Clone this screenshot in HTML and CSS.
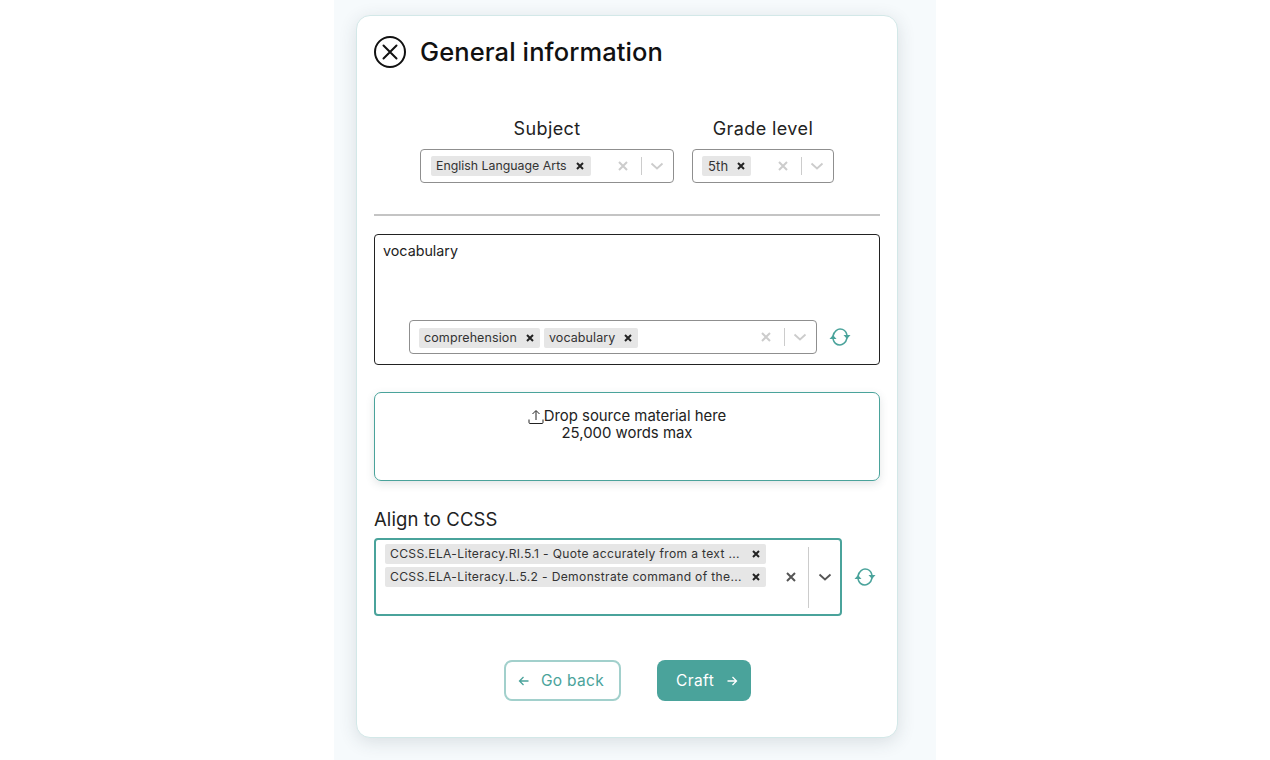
FILE: index.html
```html
<!DOCTYPE html>
<html lang="en">
<head>
<meta charset="utf-8">
<title>General information</title>
<link rel="stylesheet" href="styles.css">
</head>
<body>
<main class="column">
  <section class="card">
    <header class="head">
      <svg class="close-icon" viewBox="0 0 32 32" fill="none" stroke="#111" stroke-width="2"><circle cx="16" cy="16" r="15"/><path d="M9.500 9.500 22.500 22.500M22.500 9.500 9.500 22.500" stroke-linecap="round"/></svg>
      <h1 class="title">General information</h1>
    </header>

    <div class="selects">
      <div class="field subject">
        <label class="field-label">Subject</label>
        <div class="select">
          <div class="values"><span class="chip subject-chip"><span class="chip-text">English Language Arts</span><svg class="chip-x" viewBox="0 0 10 10"><path d="M2 2 8 8M8 2 2 8"/></svg></span></div>
          <svg class="clear" viewBox="0 0 12 12"><path d="M2 2 10 10M10 2 2 10"/></svg>
          <span class="sep"></span>
          <svg class="chev" viewBox="0 0 14 8"><path d="M1.500 1.500 7 6.500 12.500 1.500"/></svg>
        </div>
      </div>
      <div class="field grade">
        <label class="field-label">Grade level</label>
        <div class="select">
          <div class="values"><span class="chip"><span class="chip-text">5th</span><svg class="chip-x" viewBox="0 0 10 10"><path d="M2 2 8 8M8 2 2 8"/></svg></span></div>
          <svg class="clear" viewBox="0 0 12 12"><path d="M2 2 10 10M10 2 2 10"/></svg>
          <span class="sep"></span>
          <svg class="chev" viewBox="0 0 14 8"><path d="M1.500 1.500 7 6.500 12.500 1.500"/></svg>
        </div>
      </div>
    </div>

    <hr class="rule">

    <div class="topic-box">
      <div class="topic-text">vocabulary</div>
      <div class="topic-row">
        <div class="select keywords">
          <div class="values">
            <span class="chip keyword-chip"><span class="chip-text">comprehension</span><svg class="chip-x" viewBox="0 0 10 10"><path d="M2 2 8 8M8 2 2 8"/></svg></span>
            <span class="chip keyword-chip"><span class="chip-text">vocabulary</span><svg class="chip-x" viewBox="0 0 10 10"><path d="M2 2 8 8M8 2 2 8"/></svg></span>
          </div>
          <svg class="clear" viewBox="0 0 12 12"><path d="M2 2 10 10M10 2 2 10"/></svg>
          <span class="sep"></span>
          <svg class="chev" viewBox="0 0 14 8"><path d="M1.500 1.500 7 6.500 12.500 1.500"/></svg>
        </div>
        <svg class="refresh" viewBox="0 0 22 18"><path d="M4 8C5 3 9 1 11 1C14 1 17 3 18 7M18 10C17 15 13 17 11 17C8 17 5 15 4 11"/><path class="fill" d="M14.500 7H21.500L18 11ZM.5 11H7.500L4 7Z"/></svg>
      </div>
    </div>

    <div class="drop">
      <div class="drop-line"><svg class="upload" viewBox="0 0 16 16"><path d="M8 11V2M4.500 5 8 1.500 11.500 5M1 10.500V13.500Q1 14.500 2 14.500H14Q15 14.500 15 13.500V10.500"/></svg>Drop source material here</div>
      <div class="drop-line">25,000 words max</div>
    </div>

    <label class="align-label">Align to CCSS</label>
    <div class="align-row">
      <div class="select-ccss">
        <div class="ccss-values">
          <span class="chip wide"><span class="chip-text">CCSS.ELA-Literacy.RI.5.1 - Quote accurately from a text ...</span><svg class="chip-x" viewBox="0 0 10 10"><path d="M2 2 8 8M8 2 2 8"/></svg></span>
          <span class="chip wide"><span class="chip-text">CCSS.ELA-Literacy.L.5.2 - Demonstrate command of the...</span><svg class="chip-x" viewBox="0 0 10 10"><path d="M2 2 8 8M8 2 2 8"/></svg></span>
        </div>
        <svg class="clear dark" viewBox="0 0 12 12"><path d="M2 2 10 10M10 2 2 10"/></svg>
        <span class="sep tall"></span>
        <svg class="chev dark" viewBox="0 0 14 8"><path d="M1.500 1.500 7 6.500 12.500 1.500"/></svg>
      </div>
      <svg class="refresh" viewBox="0 0 22 18"><path d="M4 8C5 3 9 1 11 1C14 1 17 3 18 7M18 10C17 15 13 17 11 17C8 17 5 15 4 11"/><path class="fill" d="M14.500 7H21.500L18 11ZM.5 11H7.500L4 7Z"/></svg>
    </div>

    <div class="actions">
      <button class="btn back"><svg class="arrow" viewBox="0 0 12 12"><path d="M10.500 6H1.500M5.500 2 1.500 6 5.500 10"/></svg>Go back</button>
      <button class="btn craft">Craft<svg class="arrow" viewBox="0 0 12 12"><path d="M1.500 6H10.500M6.500 2 10.500 6 6.500 10"/></svg></button>
    </div>
  </section>
</main>
</body>
</html>
```
FILE: styles.css
```css
* { box-sizing: border-box; }
html, body { margin: 0; height: 100%; background: #fff; }
body {
  font-family: "Inter", "Liberation Sans", sans-serif;
  color: #111;
  overflow: hidden;
}
.column {
  width: 602px;
  height: 760px;
  margin-left: 334px;
  padding: 15px 38px 0 22px;
  background: #f6fafc;
  overflow: hidden;
}
.card {
  width: 542px;
  height: 723px;
  padding: 0 17px;
  background: #fff;
  border: 1px solid #d3e8e8;
  border-radius: 14px;
  box-shadow: 0 4px 18px rgba(40, 60, 70, .14);
}
.head {
  display: flex;
  align-items: center;
  gap: 14px;
  height: 32px;
  margin-top: 20px;
}
.close-icon { width: 32px; height: 32px; flex: none; }
.title { margin: 0; font-size: 25.500px; font-weight: 500; line-height: 32px; letter-spacing: .1px; }

.selects { display: flex; justify-content: center; gap: 18px; margin-top: 49px; }
.field { display: flex; flex-direction: column; align-items: center; }
.subject { width: 254px; }
.grade { width: 142px; }
.grade .select { padding-left: 9px; }
.grade .chip { padding-left: 6px; }
.field-label { font-size: 18px; line-height: 24px; height: 32px; letter-spacing: .4px; color: #222; }

.select {
  display: flex;
  align-items: center;
  width: 100%;
  height: 34px;
  padding: 0 9px 0 10px;
  background: #fff;
  border: 1px solid #8f8f8f;
  border-radius: 4px;
}
.values { display: flex; flex: 1; gap: 4px; min-width: 0; }
.chip {
  display: flex;
  align-items: center;
  height: 20px;
  padding-left: 5px;
  background: #e6e6e6;
  border-radius: 2px;
  white-space: nowrap;
}
.chip-text { font-size: 13px; line-height: 20px; color: #333; letter-spacing: .15px; }
.subject-chip .chip-text { font-size: 12.350px; letter-spacing: 0; }
.subject-chip .chip-x { margin-right: 6px; }
.keyword-chip .chip-text { font-size: 12.500px; letter-spacing: .1px; }
.wide .chip-text { font-size: 12.100px; letter-spacing: .33px; }
.chip-x { width: 10px; height: 10px; margin: 0 5px 0 8px; fill: none; stroke: #222; stroke-width: 2; }
.clear { width: 12px; height: 12px; flex: none; fill: none; stroke: #ccc; stroke-width: 2; }
.sep { width: 1px; height: 18px; margin: 0 8px 0 12px; background: #ccc; flex: none; }
.chev { width: 14px; height: 8px; flex: none; fill: none; stroke: #ccc; stroke-width: 1.800; }

.rule { height: 2px; margin: 31px 0 0; border: 0; background: #c4c4c4; }

.topic-box {
  height: 131px;
  margin-top: 18px;
  padding: 6px 8px 0;
  border: 1.500px solid #222;
  border-radius: 4px;
}
.topic-text { font-size: 14.300px; line-height: 20px; height: 79px; color: #222; }
.topic-row { display: flex; align-items: center; gap: 12px; margin-left: 26px; }
.keywords { width: 408px; flex: none; padding-left: 9px; }
.keywords .values { padding-top: 2px; }
.refresh { width: 22px; height: 18px; flex: none; fill: none; stroke: #4aa39b; stroke-width: 1.500; }
.refresh .fill { fill: #4aa39b; stroke: none; }

.drop {
  display: flex;
  flex-direction: column;
  align-items: center;
  height: 89px;
  margin-top: 27px;
  padding-top: 15px;
  border: 1px solid #4aa39b;
  border-radius: 7px;
  box-shadow: 0 3px 8px rgba(60, 80, 90, .15);
}
.drop-line { display: flex; align-items: center; height: 17px; font-size: 14.900px; line-height: 17px; color: #222; }
.upload { width: 16px; height: 16px; fill: none; stroke: #222; stroke-width: 1; }

.align-label { display: block; margin-top: 26px; font-size: 18.500px; line-height: 24px; color: #222; letter-spacing: .1px; }
.align-row { display: flex; align-items: center; gap: 12px; margin-top: 7px; }
.select-ccss {
  display: flex;
  align-items: center;
  width: 468px;
  height: 78px;
  padding: 4px 0 4px 9px;
  border: 2px solid #4aa39b;
  border-radius: 4px;
}
.ccss-values { display: flex; flex-direction: column; gap: 3px; align-self: flex-start; width: 381px; flex: none; }
.chip.wide { justify-content: space-between; }
.clear.dark { stroke: #555; margin-left: 19px; }
.sep.tall { height: 61px; margin: 0 9px 0 11px; }
.chev.dark { stroke: #555; }

.actions { display: flex; justify-content: center; gap: 36px; margin-top: 44px; margin-left: 1px; }
.btn {
  display: flex;
  align-items: center;
  height: 41px;
  border-radius: 8px;
  font-family: inherit;
  font-size: 15.500px;
  letter-spacing: .3px;
}
.back { width: 117px; padding-left: 12px; gap: 11px; background: #fff; color: #4aa39b; border: 2px solid #a2d0cc; }
.craft { width: 94px; padding-left: 19px; gap: 12px; background: #4aa39b; color: #fff; border: 0; letter-spacing: .4px; }
.arrow { width: 12px; height: 12px; fill: none; stroke: currentColor; stroke-width: 1.300; }
```
